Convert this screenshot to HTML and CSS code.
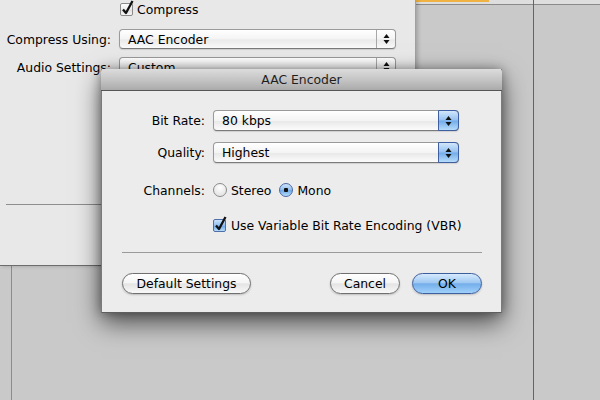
FILE: index.html
```html
<!DOCTYPE html>
<html lang="en">

<head>
    <meta charset="UTF-8">
    <title>AAC Encoder</title>
    <link rel="stylesheet" href="styles.css">
</head>

<body>

    <div class="desktop">

        <!-- export sheet behind the dialog -->
        <div class="left-column">
            <div class="back-window">
                <div class="back-form">
                    <span></span>
                    <div class="check-row">
                        <span class="checkbox">
                            <svg width="16" height="16" viewBox="0 0 16 16"><path d="M3 7.5 L6 11 L12.5 -1" /></svg>
                        </span>
                        <span>Compress</span>
                    </div>

                    <span class="label">Compress Using:</span>
                    <div class="popup">
                        <span class="popup-text">AAC Encoder</span>
                        <span class="stepper">
                            <svg width="7" height="12" viewBox="0 0 7 12"><path d="M3.5 1 L6.5 5 L0.5 5 Z M0.5 7 L6.5 7 L3.5 11 Z" /></svg>
                        </span>
                    </div>

                    <span class="label">Audio Settings:</span>
                    <div class="popup">
                        <span class="popup-text">Custom</span>
                        <span class="stepper">
                            <svg width="7" height="12" viewBox="0 0 7 12"><path d="M3.5 1 L6.5 5 L0.5 5 Z M0.5 7 L6.5 7 L3.5 11 Z" /></svg>
                        </span>
                    </div>
                </div>
                <div class="back-separator"></div>
            </div>
            <div class="lower-desk"></div>
        </div>

        <div class="right-column">
            <div class="top-strip">
                <div class="strip-orange"></div>
            </div>
            <div class="guide-red"></div>
        </div>

        <!-- sheet dialog -->
        <div class="dialog">
            <div class="titlebar">AAC Encoder</div>
            <div class="dialog-body">

                <div class="form-row">
                    <span class="label">Bit Rate:</span>
                    <div class="popup active">
                        <span class="popup-text">80 kbps</span>
                        <span class="stepper">
                            <svg width="7" height="12" viewBox="0 0 7 12"><path d="M3.5 1 L6.5 5 L0.5 5 Z M0.5 7 L6.5 7 L3.5 11 Z" /></svg>
                        </span>
                    </div>
                </div>

                <div class="form-row spaced">
                    <span class="label">Quality:</span>
                    <div class="popup active">
                        <span class="popup-text">Highest</span>
                        <span class="stepper">
                            <svg width="7" height="12" viewBox="0 0 7 12"><path d="M3.5 1 L6.5 5 L0.5 5 Z M0.5 7 L6.5 7 L3.5 11 Z" /></svg>
                        </span>
                    </div>
                </div>

                <div class="form-row small">
                    <span class="label">Channels:</span>
                    <span class="radio"></span>
                    <span class="radio-text">Stereo</span>
                    <span class="radio selected"></span>
                    <span class="radio-text">Mono</span>
                </div>

                <div class="form-row small">
                    <span class="checkbox active">
                        <svg width="16" height="16" viewBox="0 0 16 16"><path d="M3 7.5 L6 11 L12.5 -1" /></svg>
                    </span>
                    <span>Use Variable Bit Rate Encoding (VBR)</span>
                </div>

                <div class="separator"></div>

                <div class="button-row">
                    <button class="btn wide">Default Settings</button>
                    <div class="buttons-right">
                        <button class="btn">Cancel</button>
                        <button class="btn default">OK</button>
                    </div>
                </div>

            </div>
        </div>

    </div>

</body>
</html>
```

FILE: styles.css
```css
* {
    box-sizing: border-box;
}

body {
    margin: 0;
    font-family: "Lucida Grande", "DejaVu Sans", sans-serif;
    font-size: 12.4px;
    color: #000;
    background-color: #c9c9c9;
    overflow: hidden;
}

.desktop {
    position: relative;
    width: 600px;
    height: 400px;
    display: flex;
    overflow: hidden;
}

/* ---- back window ---- */

.left-column {
    width: 416px;
    display: flex;
    flex-direction: column;
}

.back-window {
    height: 266px;
    background: #e8e8e8;
    border-right: 1px solid #a0a0a0;
    border-bottom: 1px solid #6c6c6c;
    box-shadow: 2px 0 4px rgba(0, 0, 0, 0.2);
    position: relative;
    z-index: 1;
}

.back-form {
    display: grid;
    grid-template-columns: 111px 277px;
    grid-template-rows: 21px 20px 20px;
    column-gap: 8px;
    row-gap: 8px;
    align-items: center;
}

.back-form .check-row {
    align-self: start;
    margin-left: 1px;
    padding-top: 1px;
    height: 18px;
}

.label {
    text-align: right;
    white-space: nowrap;
}

.back-separator {
    margin: 127px 0 0 6px;
    height: 1px;
    background: #8e8e8e;
}

.lower-desk {
    flex: 1;
    margin-left: 11px;
    border-left: 1px solid #8c8c8c;
}

.right-column {
    flex: 1;
    position: relative;
}

.top-strip {
    height: 5px;
    background: #dedede;
    border-bottom: 1px solid #8a8a8a;
}

.strip-orange {
    width: 73px;
    height: 2px;
    background: #f0b242;
}

.guide-red {
    position: absolute;
    left: 117px;
    top: 0;
    bottom: 0;
    width: 1px;
    background: #d9361a;
}

/* ---- controls ---- */

.check-row {
    display: flex;
    align-items: center;
    gap: 4px;
}

.checkbox {
    position: relative;
    width: 13px;
    height: 13px;
    flex: none;
    border: 1px solid #8a8a8a;
    border-radius: 2px;
    background: linear-gradient(#fdfdfd, #ececec 50%, #e0e0e0 55%, #f6f6f6);
}

.checkbox svg {
    position: absolute;
    left: -1px;
    top: -2px;
    overflow: visible;
}

.checkbox path {
    fill: none;
    stroke: #111;
    stroke-width: 2.3;
    stroke-linejoin: round;
}

.checkbox.active {
    border-color: #4f6fa8;
    background: linear-gradient(#c9e2fb, #8fbdee 50%, #6ea9e8 55%, #b4dbfb);
}

.popup {
    display: flex;
    align-items: center;
    height: 20px;
    border: 1px solid #9a9a9a;
    border-bottom-color: #7a7a7a;
    border-radius: 4px;
    background: linear-gradient(#ffffff, #f4f4f4 50%, #e9e9e9 55%, #fbfbfb);
    box-shadow: 0 1px 1px rgba(0, 0, 0, 0.12);
}

.popup-text {
    flex: 1;
    padding-left: 8px;
    white-space: nowrap;
}

.stepper {
    width: 19px;
    height: 100%;
    display: flex;
    align-items: center;
    justify-content: center;
    border-left: 1px solid #a8a8a8;
    border-radius: 0 3px 3px 0;
}

.stepper path {
    fill: #111;
}

.popup.active {
    width: 246px;
    height: 21px;
}

.popup.active .stepper {
    width: 21px;
    margin: -1px -1px -1px 0;
    height: 21px;
    border: 1px solid #3f5fa0;
    border-radius: 0 4px 4px 0;
    background: linear-gradient(#d2e7fc, #95c1ef 48%, #72ace9 52%, #b6dcfb);
}

.radio {
    width: 14px;
    height: 14px;
    flex: none;
    border-radius: 50%;
    border: 1px solid #8a8a8a;
    background: radial-gradient(circle at 50% 30%, #ffffff, #e6e6e6 70%, #f4f4f4);
}

.radio.selected {
    border-color: #4a68a3;
    background: radial-gradient(circle, #111 0 2px, transparent 2.5px),
        linear-gradient(#cfe5fb, #8fbdee 50%, #6ea9e8 55%, #b8ddfb);
}

.radio-text {
    margin: 0 8px 0 4px;
}

.radio-text:last-child {
    margin-right: 0;
}

/* ---- dialog ---- */

.dialog {
    position: absolute;
    left: 101px;
    top: 69px;
    width: 401px;
    z-index: 2;
    background: #ececec;
    border: 1px solid #7a7a7a;
    border-top: none;
    border-bottom-color: #5e5e5e;
    box-shadow: 0 10px 24px rgba(0, 0, 0, 0.6), 0 0 10px rgba(0, 0, 0, 0.35);
}

.titlebar {
    height: 22px;
    line-height: 21px;
    text-align: center;
    color: #1e1e1e;
    background: linear-gradient(#dcdcdc, #c0c0c0 60%, #aaaaaa);
    border-bottom: 1px solid #565656;
    border-radius: 3px 3px 0 0;
    margin: 0 -1px;
}

.dialog-body {
    padding: 19px 0 18px;
}

.form-row {
    display: flex;
    align-items: center;
    height: 21px;
}

.form-row .label {
    width: 103px;
    margin-right: 8px;
}

.form-row.spaced {
    margin-top: 11px;
}

.form-row.small {
    height: 16px;
    margin-top: 19px;
}

.form-row .checkbox {
    margin: 0 5px 0 111px;
}

.separator {
    margin: 19px 19px 0 20px;
    height: 1px;
    background: #9a9a9a;
}

.button-row {
    display: flex;
    justify-content: space-between;
    margin: 20px 19px 0 20px;
}

.buttons-right {
    display: flex;
    gap: 12px;
}

.btn {
    width: 70px;
    height: 21px;
    padding: 0;
    font-family: inherit;
    font-size: 12.4px;
    color: #000;
    border: 1px solid #707070;
    border-radius: 11px;
    background: linear-gradient(#ffffff, #f5f5f5 45%, #e4e4e4 52%, #f8f8f8);
    box-shadow: 0 1px 2px rgba(0, 0, 0, 0.2);
}

.btn.wide {
    width: 129px;
}

.btn.default {
    border-color: #3e5f9e;
    background: linear-gradient(#d6eafd, #a0c9f2 45%, #74aeea 52%, #9fd0fa);
}
```
